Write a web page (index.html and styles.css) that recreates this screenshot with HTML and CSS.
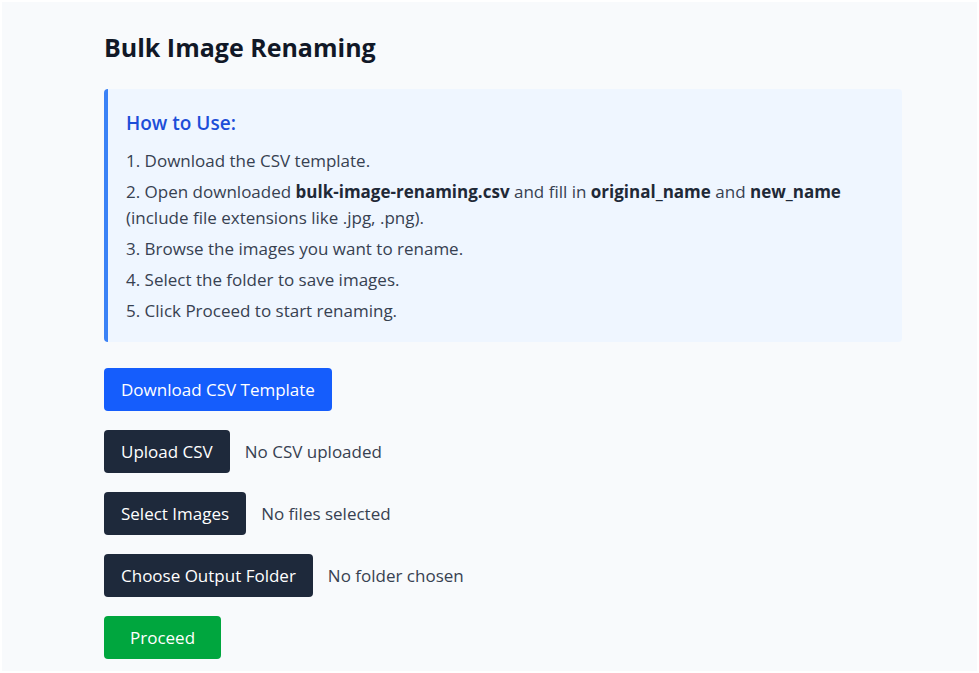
FILE: index.html
```html
<!DOCTYPE html>
<html lang="en">
<head>
<meta charset="utf-8">
<title>Bulk Image Renaming</title>
<link rel="stylesheet" href="styles.css">
</head>
<body>
<main class="page">
  <h1 class="title">Bulk Image Renaming</h1>
  <section class="info">
    <h2 class="info-title">How to Use:</h2>
    <ol class="steps">
      <li>1. Download the CSV template.</li>
      <li>2. Open downloaded <b>bulk-image-renaming.csv</b> and fill in <b>original_name</b> and <b>new_name</b> (include file extensions like .jpg, .png).</li>
      <li>3. Browse the images you want to rename.</li>
      <li>4. Select the folder to save images.</li>
      <li>5. Click Proceed to start renaming.</li>
    </ol>
  </section>
  <div class="actions">
    <div class="row"><button class="btn btn-blue">Download CSV Template</button></div>
    <div class="row"><button class="btn btn-dark">Upload CSV</button><span class="status">No CSV uploaded</span></div>
    <div class="row"><button class="btn btn-dark">Select Images</button><span class="status">No files selected</span></div>
    <div class="row"><button class="btn btn-dark">Choose Output Folder</button><span class="status">No folder chosen</span></div>
    <div class="row"><button class="btn btn-green">Proceed</button></div>
  </div>
</main>
</body>
</html>
```
FILE: styles.css
```css
html {
  background: #ffffff;
}
body {
  margin: 2px;
  min-height: calc(100vh - 4px);
  background: #f8fafc;
  font-family: "Open Sans", "Noto Sans", sans-serif;
  color: #1f2937;
  overflow: hidden;
}
.page {
  width: 798px;
  margin-left: 102px;
  padding-top: 29px;
}
.title {
  margin: 0;
  font-size: 25px;
  line-height: 32px;
  font-weight: 700;
  color: #111827;
}
.info {
  margin-top: 26px;
  background: #eff6ff;
  border-left: 4px solid #3b82f6;
  border-radius: 4px;
  padding: 20px 18px 18px 18px;
}
.info-title {
  margin: 0 0 11px 0;
  font-size: 19px;
  line-height: 28px;
  font-weight: 600;
  color: #1d4ed8;
}
.steps {
  margin: 0;
  padding: 0;
  list-style: none;
  font-size: 17px;
  line-height: 26px;
  color: #374151;
}
.steps li + li {
  margin-top: 5px;
}
.steps b {
  font-weight: 700;
  color: #1f2937;
}
.actions {
  margin-top: 26px;
  display: flex;
  flex-direction: column;
  gap: 19px;
}
.row {
  display: flex;
  align-items: center;
  gap: 15px;
}
.btn {
  font-family: inherit;
  font-size: 17px;
  line-height: 25px;
  height: 43px;
  padding: 9px 17px;
  border: 0;
  border-radius: 4px;
  color: #ffffff;
  cursor: pointer;
}
.btn-blue {
  background: #155dfc;
}
.btn-dark {
  background: #1e293b;
}
.btn-green {
  background: #00a63e;
  padding-left: 26px;
  padding-right: 26px;
}
.status {
  font-size: 17px;
  color: #374151;
}
```
